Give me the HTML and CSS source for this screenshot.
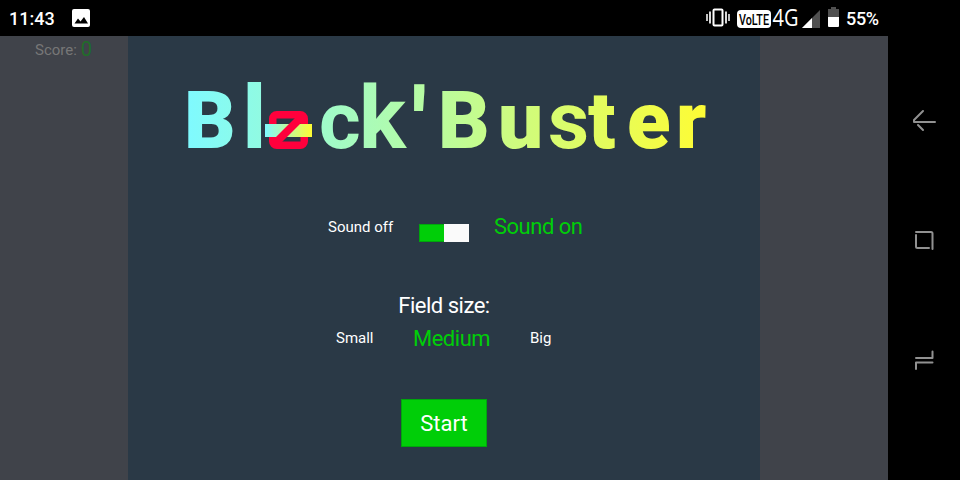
FILE: index.html
```html
<!DOCTYPE html>
<html lang="en">
<head>
<meta charset="utf-8">
<title>Block'Buster</title>
<link rel="stylesheet" href="styles.css">
</head>
<body>
<div class="screen">
  <div class="device">
    <header class="status">
      <span class="clock">11:43</span>
      <svg class="photo" width="18" height="18" viewBox="0 0 18 18"><rect width="18" height="18" rx="2" fill="#fff"/><path d="M2.5 14.5 6 9.5 8.5 12.5 12 8 16 14.5Z" fill="#000"/></svg>
      <svg class="signals" width="140" height="36" viewBox="0 0 140 36">
        <g fill="none" stroke="#fff" stroke-width="2"><rect x="13.500" y="9.500" width="9" height="16" rx="1"/><path d="M10 11.5V23.5M26 11.5V23.5" stroke-width="1.7"/><path d="M7 14V21M29 14V21" stroke-width="1.5"/></g>
        <rect x="37" y="10" width="34" height="18" rx="4" fill="#fff"/>
        <text x="39" y="25" class="volte" textLength="30" lengthAdjust="spacingAndGlyphs">VoLTE</text>
        <text x="72.500" y="26" class="network" textLength="26" lengthAdjust="spacingAndGlyphs">4G</text>
        <path d="M102 28 120 10V28Z" fill="#505050"/><path d="M102 28 112 18V28Z" fill="#fff"/>
        <path d="M128 17V9H131V7H136V9H139V17Z" fill="#505050"/><path d="M128 17H139V26Q139 27 138 27H129Q128 27 128 26Z" fill="#fff"/>
      </svg>
      <span class="battery">55%</span>
    </header>
    <main class="game">
      <aside class="side"><span class="score">Score:</span><span class="points">0</span></aside>
      <section class="panel">
        <svg class="logo" width="632" height="84" viewBox="128 72 632 84">
          <defs>
            <linearGradient id="title" gradientUnits="userSpaceOnUse" x1="187" x2="710" y1="0" y2="0"><stop offset="0" stop-color="#7ffaff"/><stop offset=".5" stop-color="#bdfc99"/><stop offset="1" stop-color="#fffc33"/></linearGradient>
            <linearGradient id="bar"><stop offset="0" stop-color="#7ffaff"/><stop offset="1" stop-color="#fffc33"/></linearGradient>
          </defs>
          <text class="title" y="148" fill="url(#title)" x="184 242 270 319 359 411 438 498 548 588 627 676">B<tspan class="stem">l</tspan><tspan class="ring">o</tspan><tspan class="round">c</tspan><tspan class="tall">k</tspan><tspan class="mark" dy="12">'</tspan><tspan dy="-12">B</tspan>u<tspan class="round">s</tspan>ter</text>
          <rect x="272.750" y="114.750" width="31.500" height="30.500" rx="4" fill="#2a3946" stroke="#ff003c" stroke-width="7.500"/>
          <rect x="265" y="124" width="47" height="13" fill="url(#bar)"/>
          <path d="M276 137 295 118H301V123L282 142H276Z" fill="#ff003c"/>
        </svg>
        <div class="sound">
          <span class="small off">Sound off</span>
          <span class="switch"></span>
          <span class="chosen on">Sound on</span>
        </div>
        <div class="heading">Field size:</div>
        <div class="sizes"><span class="small s">Small</span><span class="chosen m">Medium</span><span class="small b">Big</span></div>
        <button class="start">Start</button>
      </section>
      <aside class="side"></aside>
    </main>
  </div>
  <nav class="nav">
    <svg width="24" height="24" viewBox="0 0 24 24"><path d="M11 3 2 12V14H23M6 17 11 22"/></svg>
    <svg width="24" height="24" viewBox="0 0 24 24"><path d="M4 4H19Q20.500 4 20.500 5.500V21M4 7V18.500Q4 20 5.500 20H17"/></svg>
    <svg width="24" height="24" viewBox="0 0 24 24"><path d="M20.500 3.500V10H4M4 21V14.500H20.500"/></svg>
  </nav>
</div>
</body>
</html>
```
FILE: styles.css
```css
* { box-sizing: border-box; }
body { margin: 0; background: #000; color: #fff; font-family: Roboto, "Liberation Sans", sans-serif; }
.screen { display: flex; width: 960px; height: 480px; overflow: hidden; }
.device { width: 888px; display: flex; flex-direction: column; }
.status { height: 36px; display: flex; align-items: center; background: #000; padding-left: 9px; }
.clock { width: 63px; font-size: 18px; font-weight: 500; }
.signals { margin-left: 610px; }
.battery { margin-left: 6px; font-size: 18px; font-weight: 500; letter-spacing: -0.3px; }
.volte { font: 500 15px Roboto, sans-serif; fill: #000; }
.network { font: 400 24px "Open Sans", sans-serif; fill: #fff; }
.game { flex: 1; display: flex; }
.side { width: 128px; background: #40434a; padding-left: 35px; display: flex; align-items: flex-start; }
.score { font-size: 15px; line-height: 28px; color: #777; }
.points { font-size: 20px; line-height: 26px; color: #206d29; margin-left: 4px; }
.panel { width: 632px; background: #2a3946; padding-top: 36px; display: flex; flex-direction: column; align-items: center; }
.logo { display: block; flex: none; overflow: visible; }
.title { font: 900 80px Roboto, sans-serif; }
.stem { font: 700 91px Inter, sans-serif; }
.tall { font-size: 88px; font-weight: 700; }
.mark { font-size: 100px; font-weight: 700; }
.round { font-weight: 700; }
.ring { font-size: 64px; font-weight: 700; fill: #ff003c; }
.sound { width: 100%; height: 30px; margin-top: 56px; padding-left: 200px; display: flex; line-height: 30px; white-space: nowrap; }
.small { font-size: 15px; }
.chosen { font-size: 22px; color: #00ce08; letter-spacing: -0.5px; }
.off { width: 91px; }
.switch { width: 50px; height: 18px; margin-top: 12px; background: linear-gradient(90deg, #00ce08 50%, #fafafa 50%); border: 1px solid; border-image: linear-gradient(90deg, #00a60c 50%, #fafafa 50%) 1; }
.on { margin-left: 25px; }
.heading { height: 30px; margin-top: 49px; font-size: 22px; line-height: 30px; letter-spacing: -0.5px; }
.sizes { width: 100%; height: 32px; margin-top: 2px; padding-left: 208px; display: flex; line-height: 32px; }
.s { width: 77px; line-height: 31px; }
.b { line-height: 31px; }
.m { width: 117px; }
.start { width: 86px; height: 48px; margin-top: 44px; padding: 0; border: 1px solid #00a60c; background: #00ce08; color: #fff; font: 22px Roboto, sans-serif; }
.nav { width: 72px; display: flex; flex-direction: column; align-items: center; justify-content: center; gap: 96px; }
.nav svg { fill: none; stroke: #919191; stroke-width: 2; stroke-linecap: round; stroke-linejoin: round; }
```
